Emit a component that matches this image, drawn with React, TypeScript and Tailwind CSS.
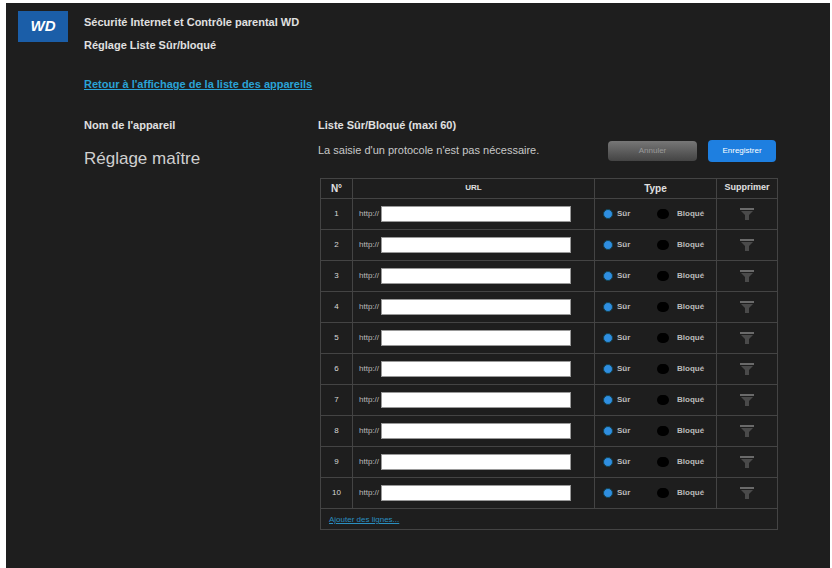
const rows = [1, 2, 3, 4, 5, 6, 7, 8, 9, 10];

const TrashIcon = () => (
  <svg width="20" height="14" viewBox="0 0 20 14">
    <rect x="3" y="1" width="14" height="2" fill="#6a6a6a" />
    <path d="M4 4h12l-4 4v5h-4V8z" fill="#4a4a4a" />
  </svg>
);

export default function App() {
  return (
    <div className="w-[832px] h-[568px] bg-white pl-[6px] pt-[3px] pr-[2px] font-[Liberation_Sans,Arial,sans-serif]">
      <div className="h-full bg-[#1e1e1e] text-[#d8d8d8]">
        {/* HEADER */}
        <div className="flex items-start gap-4 pl-3 pt-[8px]">
          <div className="w-[50px] h-[31px] bg-[#1b5ea8] flex items-center justify-center text-white font-bold italic text-[15px]">
            WD
          </div>
          <div className="flex flex-col gap-[6px] pt-[3px] text-[11px] font-bold text-[#e0e0e0]">
            <span>Sécurité Internet et Contrôle parental WD</span>
            <span>Réglage Liste Sûr/bloqué</span>
          </div>
        </div>
        <div className="pl-[78px] mt-[18px]">
          <a className="text-[11px] font-bold text-[#2aa3d6] underline">
            Retour à l'affichage de la liste des appareils
          </a>
        </div>

        {/* BODY */}
        <div className="flex mt-[22px]">
          <div className="w-[312px] pl-[78px]">
            <div className="text-[11px] font-bold text-[#e0e0e0]">Nom de l'appareil</div>
            <div className="text-[17px] mt-[12px] text-[#d0d0d0]">Réglage maître</div>
          </div>
          <div className="w-[462px]">
            <div className="text-[11px] font-bold text-[#e0e0e0]">Liste Sûr/Bloqué (maxi 60)</div>
            <div className="flex items-center mt-[6px]">
              <span className="text-[11px] text-[#c8c8c8] w-[290px]">
                La saisie d'un protocole n'est pas nécessaire.
              </span>
              <button className="w-[89px] h-[20px] rounded-sm bg-gradient-to-b from-[#777] to-[#444] text-[8px] text-[#999]">
                Annuler
              </button>
              <button className="ml-[11px] w-[68px] h-[22px] rounded-sm bg-[#1e7fe0] text-[8px] text-white">
                Enregistrer
              </button>
            </div>

            <table className="mt-[16px] ml-[2px] w-[458px] border-collapse border border-[#444] text-[10px]">
              <thead>
                <tr className="h-[20px] font-bold text-[#e0e0e0]">
                  <th className="w-[32px] border border-[#444]">N°</th>
                  <th className="w-[242px] border border-[#444] text-[8px]">URL</th>
                  <th className="w-[122px] border border-[#444]">Type</th>
                  <th className="border border-[#444] text-[9px]">Supprimer</th>
                </tr>
              </thead>
              <tbody>
                {rows.map((n) => (
                  <tr key={n} className="h-[31px]">
                    <td className="border border-[#444] text-center text-[8px]">{n}</td>
                    <td className="border border-[#444] px-[6px]">
                      <div className="flex items-center gap-[2px]">
                        <span className="text-[8px] text-[#bbb]">http://</span>
                        <div className="w-[190px] h-[16px] bg-white border border-[#999]" />
                      </div>
                    </td>
                    <td className="border border-[#444]">
                      <div className="flex items-center pl-[8px] text-[8px] font-bold text-[#bbb]">
                        <span className="w-[10px] h-[10px] rounded-full bg-[#2f8ee0] border border-[#145]" />
                        <span className="ml-[4px] w-[40px]">Sûr</span>
                        <span className="w-[12px] h-[10px] rounded-full bg-black" />
                        <span className="ml-[8px]">Bloqué</span>
                      </div>
                    </td>
                    <td className="border border-[#444]">
                      <div className="flex justify-center">
                        <TrashIcon />
                      </div>
                    </td>
                  </tr>
                ))}
                <tr className="h-[21px]">
                  <td colSpan={4} className="border border-[#444] pl-[8px]">
                    <a className="text-[8px] text-[#2a8fc0] underline">Ajouter des lignes...</a>
                  </td>
                </tr>
              </tbody>
            </table>
          </div>
        </div>
      </div>
    </div>
  );
}
